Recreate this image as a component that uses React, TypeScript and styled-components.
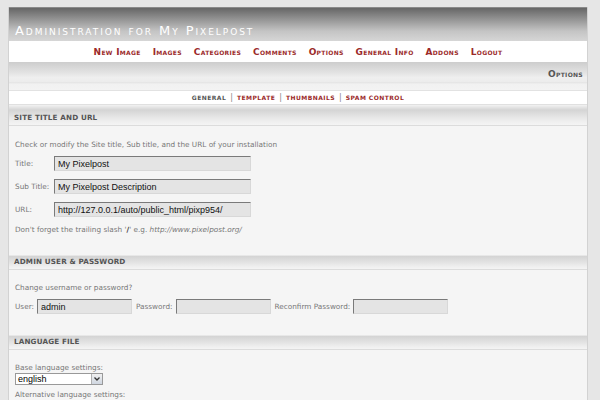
import React from "react";
import styled, { createGlobalStyle } from "styled-components";

const Global = createGlobalStyle`
  html, body { margin: 0; padding: 0; background: #e6e6e6; }
  body { font-family: "DejaVu Sans", Verdana, sans-serif; }
`;

const Page = styled.div`
  margin: 7px 0 0 8px;
  width: 578px;
  border-left: 1px solid #d2d2d2;
  border-right: 1px solid #d2d2d2;
  background: #f5f5f5;
  min-height: 393px;
`;

const Header = styled.div`
  height: 33px;
  border-top: 1px solid #8a8a8a;
  background: linear-gradient(to bottom, #666 0%, #8e8e8e 30%, #c4c4c4 70%, #d6d6d6 100%);
  display: flex;
  align-items: flex-end;
  padding-left: 6px;
`;

const Title = styled.h1`
  margin: 0 0 2px 0;
  font-family: "DejaVu Sans", Verdana, sans-serif;
  font-weight: normal;
  font-size: 13px;
  font-variant: small-caps;
  letter-spacing: 1.95px;
  color: #fff;
  line-height: 16px;
`;

const Nav = styled.nav`
  height: 21px;
  background: #fff;
  display: flex;
  justify-content: center;
  align-items: center;
  gap: 12px;
`;

const NavLink = styled.a`
  font-family: "DejaVu Sans", Verdana, sans-serif;
  font-weight: bold;
  font-size: 9px;
  font-variant: small-caps;
  color: #9b2a2a;
  text-decoration: none;
  letter-spacing: 0.3px;
`;

const SubBar = styled.div`
  height: 28px;
  background: linear-gradient(to bottom, #cdcdcd 0%, #e4e4e4 40%, #efefef 55%, #ececec 72%, #e2e2e2 74%, #f1f1f1 78%, #f3f3f3 100%);
  display: flex;
  justify-content: flex-end;
  align-items: center;
  padding: 0 4px 4px 0;
  box-sizing: border-box;
`;

const PageName = styled.span`
  font-family: "DejaVu Sans", Verdana, sans-serif;
  font-weight: bold;
  font-size: 9px;
  font-variant: small-caps;
  color: #555;
  letter-spacing: 0.3px;
`;

const SubMenu = styled.div`
  height: 15px;
  background: #fff;
  border-top: 1px solid #e2e2e2;
  border-bottom: 1px solid #e0e0e0;
  box-sizing: border-box;
  display: flex;
  justify-content: center;
  align-items: center;
  gap: 4px;
`;

const SubLink = styled.a<{ $active?: boolean }>`
  font-family: "DejaVu Sans", Verdana, sans-serif;
  font-weight: bold;
  font-size: 6px;
  letter-spacing: 0.45px;
  text-transform: uppercase;
  color: ${(p) => (p.$active ? "#555" : "#9b2a2a")};
  text-decoration: none;
`;

const Sep = styled.span`
  font-size: 8px;
  color: #888;
  font-family: "DejaVu Sans", Verdana, sans-serif;
`;

const SectionHead = styled.div<{ $tall?: boolean }>`
  height: ${(p) => (p.$tall ? 21 : 15)}px;
  background: linear-gradient(to bottom, #f2f2f2 0%, #d4d4d4 ${(p) => (p.$tall ? 25 : 10)}%, #e6e6e6 60%, #f0f0f0 85%, #f4f4f4 100%);
  border-bottom: 1px solid #dcdcdc;
  display: flex;
  align-items: flex-end;
  padding: 0 0 3px 5px;
  box-sizing: border-box;
`;

const SectionTitle = styled.h2`
  margin: 0;
  font-family: "DejaVu Sans", Verdana, sans-serif;
  font-weight: bold;
  font-size: 7.2px;
  line-height: 9px;
  text-transform: uppercase;
  color: #555;
  letter-spacing: 0.15px;
`;

const SectionBody = styled.div<{ $pb: number }>`
  padding: 0 6px ${(p) => p.$pb}px 6px;
  display: flex;
  flex-direction: column;
`;

const Text = styled.p<{ $mt: number }>`
  margin: ${(p) => p.$mt}px 0 0 0;
  font-family: "DejaVu Sans", Verdana, sans-serif;
  font-size: 7.3px;
  line-height: 10px;
  color: #777;
`;

const Em = styled.em`
  font-style: italic;
`;

const Slash = styled.b`
  color: #333;
`;

const FieldRow = styled.div<{ $mt: number }>`
  margin-top: ${(p) => p.$mt}px;
  display: flex;
  align-items: center;
  height: 15px;
`;

const Label = styled.label<{ $w?: number }>`
  font-family: "DejaVu Sans", Verdana, sans-serif;
  font-size: 7.3px;
  color: #777;
  width: ${(p) => (p.$w ? `${p.$w}px` : "auto")};
  margin-right: ${(p) => (p.$w ? 0 : 3)}px;
  flex-shrink: 0;
`;

const Input = styled.input<{ $w: number }>`
  width: ${(p) => p.$w}px;
  height: 15px;
  box-sizing: border-box;
  background: #e4e4e4;
  border: 1px solid #d8d8d8;
  border-top-color: #7a7a7a;
  border-left-color: #7a7a7a;
  padding: 0 3px;
  font-family: "Liberation Sans", Arial, sans-serif;
  font-size: 9px;
  color: #111;
  margin-right: 4px;
  outline: none;
`;

const SelectBox = styled.div`
  margin-top: 0;
  width: 88px;
  height: 12px;
  display: flex;
  border: 1px solid #999;
  box-sizing: border-box;
  background: #fff;
`;

const SelectValue = styled.span`
  flex: 1;
  font-family: "Liberation Sans", Arial, sans-serif;
  font-size: 9px;
  line-height: 10px;
  padding-left: 2px;
  color: #000;
`;

const SelectBtn = styled.span`
  width: 10px;
  background: linear-gradient(to bottom, #f0f0f0, #cfd6e0);
  border-left: 1px solid #b0b0b0;
  display: flex;
  align-items: center;
  justify-content: center;
`;

const navItems = ["New Image", "Images", "Categories", "Comments", "Options", "General Info", "Addons", "Logout"];

export default function App() {
  return (
    <>
      <Global />
      <Page>
        <Header>
          <Title>Administration for My Pixelpost</Title>
        </Header>
        <Nav>
          {navItems.map((n) => (
            <NavLink key={n} href="#">{n}</NavLink>
          ))}
        </Nav>
        <SubBar>
          <PageName>Options</PageName>
        </SubBar>
        <SubMenu>
          <SubLink $active href="#">General</SubLink>
          <Sep>|</Sep>
          <SubLink href="#">Template</SubLink>
          <Sep>|</Sep>
          <SubLink href="#">Thumbnails</SubLink>
          <Sep>|</Sep>
          <SubLink href="#">Spam Control</SubLink>
        </SubMenu>

        <SectionHead $tall>
          <SectionTitle>Site Title and URL</SectionTitle>
        </SectionHead>
        <SectionBody $pb={20}>
          <Text $mt={14}>Check or modify the Site title, Sub title, and the URL of your installation</Text>
          <FieldRow $mt={6}>
            <Label $w={39}>Title:</Label>
            <Input $w={197} defaultValue="My Pixelpost" />
          </FieldRow>
          <FieldRow $mt={8}>
            <Label $w={39}>Sub Title:</Label>
            <Input $w={197} defaultValue="My Pixelpost Description" />
          </FieldRow>
          <FieldRow $mt={8}>
            <Label $w={39}>URL:</Label>
            <Input $w={197} defaultValue="http://127.0.0.1/auto/public_html/pixp954/" />
          </FieldRow>
          <Text $mt={8}>
            Don't forget the trailing slash '<Slash>/</Slash>' e.g. <Em>http://www.pixelpost.org/</Em>
          </Text>
        </SectionBody>

        <SectionHead>
          <SectionTitle>Admin User &amp; Password</SectionTitle>
        </SectionHead>
        <SectionBody $pb={21}>
          <Text $mt={13}>Change username or password?</Text>
          <FieldRow $mt={6}>
            <Label>User:</Label>
            <Input $w={95} defaultValue="admin" />
            <Label>Password:</Label>
            <Input $w={95} type="text" />
            <Label>Reconfirm Password:</Label>
            <Input $w={95} type="text" />
          </FieldRow>
        </SectionBody>

        <SectionHead>
          <SectionTitle>Language File</SectionTitle>
        </SectionHead>
        <SectionBody $pb={10}>
          <Text $mt={13}>Base language settings:</Text>
          <SelectBox>
            <SelectValue>english</SelectValue>
            <SelectBtn>
              <svg width="6" height="4" viewBox="0 0 6 4">
                <path d="M0.5 0.5 L3 3 L5.5 0.5" stroke="#333" strokeWidth="1.3" fill="none" />
              </svg>
            </SelectBtn>
          </SelectBox>
          <Text $mt={5}>Alternative language settings:</Text>
        </SectionBody>
      </Page>
    </>
  );
}
